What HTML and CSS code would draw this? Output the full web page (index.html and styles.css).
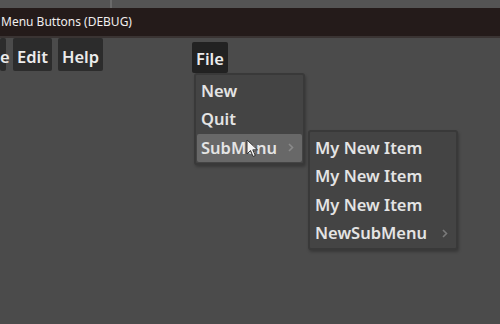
FILE: index.html
```html
<!DOCTYPE html>
<html lang="en">
<head>
    <meta charset="UTF-8">
    <title>Menu Buttons (DEBUG)</title>
    <link rel="stylesheet" href="styles.css">
</head>
<body>
    <div id="desk"><div class="desk-line"></div></div>
    <div id="titlebar">Menu Buttons (DEBUG)</div>

    <div id="stage">
        <div class="menubar">
            <button class="menu-btn cut">e</button>
            <button class="menu-btn">Edit</button>
            <button class="menu-btn">Help</button>
            <button class="menu-btn file">File</button>
        </div>

        <!-- popup for File -->
        <div class="popup" id="file-popup">
            <div class="item">New</div>
            <div class="item">Quit</div>
            <div class="item hover">SubMenu
                <svg class="arrow" width="6" height="9" viewBox="0 0 6 9"><path d="M1 1 L4.5 4.5 L1 8" fill="none" stroke="#8a8a8a" stroke-width="1.6"/></svg>
            </div>
        </div>

        <!-- popup for SubMenu -->
        <div class="popup" id="sub-popup">
            <div class="item">My New Item</div>
            <div class="item">My New Item</div>
            <div class="item">My New Item</div>
            <div class="item">NewSubMenu
                <svg class="arrow" width="6" height="9" viewBox="0 0 6 9"><path d="M1 1 L4.5 4.5 L1 8" fill="none" stroke="#7a7a7a" stroke-width="1.6"/></svg>
            </div>
        </div>

        <svg id="cursor" width="14" height="20" viewBox="0 0 14 20">
            <path d="M1 1 L1 15 L4.5 11.5 L7 17.5 L9.3 16.5 L6.8 10.8 L11.5 10.8 Z" fill="#f4f4f4" stroke="#333" stroke-width="1"/>
        </svg>
    </div>
</body>
</html>
```

FILE: styles.css
```css
body{
    margin:0;
    background-color:#4b4b4b;
    font-family:"Noto Sans", "Open Sans", sans-serif;
    color:#e4e4e4;
    overflow:hidden;
}

#desk{
    height:8px;
    background-color:#545454;
    display:flex;
}

.desk-line{
    margin-left:110px;
    width:2px;
    background-color:#6a6a6a;
}

#titlebar{
    height:28px;
    background-color:#241b1a;
    border-bottom:2px solid #3a3433;
    font-size:12px;
    line-height:28px;
    padding-left:1px;
    color:#f0eeee;
    white-space:nowrap;
}

#stage{
    position:relative;
    height:286px;
}

.menubar{
    display:flex;
    gap:6px;
}

.menu-btn{
    font-family:inherit;
    font-size:16.5px;
    font-weight:600;
    color:#ececec;
    background-color:#2c2c2c;
    border:none;
    border-radius:2px;
    height:33px;
    padding:3px 4px 0;
    line-height:29px;
}

.menu-btn.cut{
    width:6px;
    padding:3px 0 0;
    text-align:right;
    margin-right:1px;
}

.menu-btn.file{
    margin-left:83px;
    background-color:#222;
    margin-top:4px;
    height:31px;
    padding-top:1px;
}

.popup{
    position:absolute;
    background-color:#444;
    border:2px solid #393939;
    border-radius:3px;
    box-shadow:1px 2px 3px rgba(0,0,0,0.25);
    display:flex;
    flex-direction:column;
    padding:2px 0 1px;
}

#file-popup{
    left:194px;
    top:35px;
    width:107px;
}

#sub-popup{
    left:308px;
    top:92px;
    width:146px;
}

.item{
    font-size:16.5px;
    font-weight:600;
    height:28.3px;
    line-height:28px;
    padding-left:5px;
    display:flex;
    align-items:center;
    white-space:nowrap;
}

.item.hover{
    background-color:#686868;
    margin:0 1px;
    padding-left:4px;
    border-radius:2px;
}

.arrow{
    margin-left:auto;
    margin-right:8px;
}

#cursor{
    position:absolute;
    left:246px;
    top:101px;
}
```
